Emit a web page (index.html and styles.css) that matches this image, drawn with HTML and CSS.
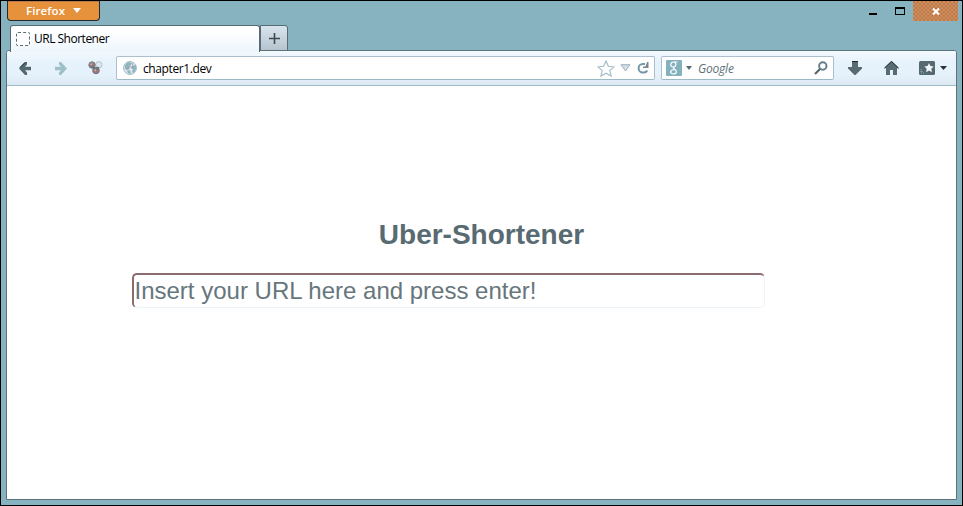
FILE: index.html
```html
<!DOCTYPE html>
<html lang="en">
<head>
<meta charset="utf-8">
<title>URL Shortener</title>
<link rel="stylesheet" href="styles.css">
</head>
<body>
<div class="window">
  <header class="titlebar">
    <button class="app-menu"><span class="app-name">Firefox</span><svg width="8" height="5"><path d="M0 0h8L4 5z" fill="#fff"/></svg></button>
    <div class="controls">
      <svg class="minimize" width="8" height="2"><path d="M0 0h8v2H0z"/></svg>
      <svg class="maximize" width="10" height="8"><path d="M0 0h10v8H0zM1 2v5h8V2z" fill-rule="evenodd"/></svg>
      <button class="close"><svg width="8" height="7"><path d="M1 .5l6 6M7 .5l-6 6" stroke="#fff" stroke-width="2"/></svg></button>
    </div>
  </header>
  <nav class="tabs">
    <div class="tab"><span class="favicon"></span><span class="tab-title">URL Shortener</span></div>
    <button class="new-tab"><svg width="11" height="11"><path d="M5.5 0v11M0 5.5h11" stroke="#3c4a50" stroke-width="1.6"/></svg></button>
  </nav>
  <main class="frame">
    <div class="toolbar">
      <svg class="back" width="13" height="13"><path d="M0 6.5L6 0h2v2.5L6 4.8h6v3.4H6l2 2.3V13H6z" fill="#536970"/><path d="M1 5.5L6 .5" stroke="#182126"/></svg>
      <svg class="forward" width="13" height="13"><path d="M13 6.5L7 0H5v2.5l2 2.3H1v3.4h6l-2 2.3V13h2z" fill="#9fc0c9"/></svg>
      <svg class="addon" width="15" height="14"><circle cx="10.8" cy="3.8" r="3.2" fill="#dfe8ef" stroke="#b0c1ca"/><circle cx="4" cy="4" r="3.2" fill="#a37373" stroke="#75838a"/><circle cx="8" cy="9.5" r="3.3" fill="#a37373" stroke="#6b7b82"/><path d="M4 5l3 3.5M9 9l1.5-3" stroke="#66767d" stroke-width="2"/><circle cx="3.3" cy="3.2" r="1" fill="#c4b3b8"/><circle cx="7.3" cy="9.2" r="1" fill="#d0b0ab"/></svg>
      <div class="field address">
        <svg class="globe" width="14" height="14"><circle cx="7" cy="7" r="6.4" fill="#dce9ee" stroke="#9cb6bf"/><path d="M2 4l3-3 4 1-1 2-2 1 1 2-2 2-3-1zM9 5l4-1v4l-2 4-2-1 1-3-2-1zM4 10l3-1 1 4-3-1z" fill="#8fb5c0"/><path d="M3 9l4-4 2 2M9 2l1 3-1 3" fill="none" stroke="#a78f94" stroke-width=".7"/></svg>
        <span class="url">chapter1.dev</span>
        <svg class="star" width="18" height="17"><path d="M9 1l2.4 5.3 5.6.6-4.2 3.7 1.3 5.5L9 13.2l-5.1 2.9 1.3-5.5L1 6.9l5.6-.6z" fill="#fff" stroke="#a5c0c9" stroke-width="1.2"/></svg>
        <svg class="history" width="11" height="8"><path d="M1 .7h9L5.5 7z" fill="#d4dce4" stroke="#9db2bd"/></svg>
        <svg class="reload" width="12" height="12"><path d="M8 2.1H5.8A4.2 4.2 0 0 0 5.8 10.5H7a3.5 3.5 0 0 0 3.2-2" fill="none" stroke="#7199a5" stroke-width="2"/><path d="M11.5 0v6H6V4.5h2.5L10 0z" fill="#6f8e98"/><path d="M8.5 4.5H10V2.5" fill="none" stroke="#a47375"/></svg>
      </div>
      <div class="field search">
        <svg class="engine" width="16" height="16"><rect width="16" height="16" rx="1" fill="#83b2be"/><path d="M11.5 2H7.8C3.8 2 3.8 7 7.2 7 10.8 7 10.5 2 7.8 2M8 7c-1 1-.3 1.5.7 2.3 3 2.2 1.5 4.7-1.2 4.7-4 0-4-4.3 1-4.5" fill="none" stroke="#fff" stroke-width="1.2"/></svg>
        <svg class="engine-caret" width="6" height="4"><path d="M0 0h6L3 4z" fill="#586c73"/></svg>
        <span class="provider">Google</span>
        <svg class="magnifier" width="14" height="14"><circle cx="8.8" cy="5" r="3.7" fill="#fff" stroke="#64818a" stroke-width="2"/><path d="M6 8l-5 5" stroke="#53676f" stroke-width="2.2"/></svg>
      </div>
      <svg class="download" width="14" height="14"><path d="M4 0h6v6h4v1.5L7.5 14h-1L0 7.5V6h4z" fill="#586b72"/><path d="M4 .5h6" stroke="#1d282c"/></svg>
      <svg class="home" width="15" height="14"><path d="M7.5 0L15 7.3H13V14H9V9H6v5H2V7.3H0z" fill="#586b72"/><path d="M.5 7l7-6.6 7 6.6" fill="none" stroke="#1d282c"/></svg>
      <svg class="bookmarks" width="16" height="14"><rect width="16" height="14" rx="1.5" fill="#566970"/><path d="M10 2l1.4 3.1 3.3.4-2.4 2.3.6 3.4L10 9.6l-2.9 1.6.6-3.4-2.4-2.3 3.3-.4z" fill="#f1f8fd"/><path d="M2 8v4h3M3 10v1" fill="none" stroke="#86b3bf" stroke-dasharray="1 1"/></svg>
      <svg class="bookmarks-caret" width="7" height="4"><path d="M0 0h7L3.5 4z" fill="#273238"/></svg>
    </div>
    <section class="page">
      <h1>Uber-Shortener</h1>
      <input class="url-input" type="text" placeholder="Insert your URL here and press enter!">
    </section>
  </main>
</div>
</body>
</html>
```
FILE: styles.css
```css
* { box-sizing: border-box; }
body { margin: 0; overflow: hidden; font-family: "Open Sans", "Noto Sans", sans-serif; font-size: 12px; color: #000; }
svg { display: block; flex: none; }
button { font: inherit; padding: 0; }

.window { width: 963px; height: 506px; display: flex; flex-direction: column; background: #86b3bf; border: 1px solid #000; padding: 0 5px 5px; }
.titlebar { display: flex; justify-content: space-between; height: 24px; flex: none; }
.app-menu { display: flex; align-items: center; width: 93px; height: 20px; margin-left: 1px; padding: 0 0 1px 18px; background: #e6913b; border: 1px solid #24292b; border-top: 0; border-radius: 0 0 4px 4px; color: #fff; box-shadow: inset 0 1px #b87852; }
.app-name { width: 47px; text-align: left; font-weight: 600; font-size: 11.5px; letter-spacing: .1px; }
.controls { display: flex; }
.minimize { margin: 12px 18px 0 0; }
.maximize { margin: 6px 8px 0 0; }
.close { display: flex; align-items: center; justify-content: center; width: 45px; height: 20px; margin-right: -1px; border: 0; background: repeating-conic-gradient(#dc8b42 0 25%, #b07c66 0 50%) 0 0 / 4px 4px; }

.tabs { display: flex; height: 25px; flex: none; padding-left: 4px; }
.tab { display: flex; align-items: center; width: 250px; height: 27px; margin-bottom: -2px; padding: 0 0 2px 5px; border: 1px solid #566b72; border-bottom: 0; border-radius: 3px 3px 0 0; background: linear-gradient(#fff, #fff 5px, #edf6fd 26px); position: relative; }
.favicon { width: 14px; height: 14px; margin: 1px 4px 0 0; border: 1px dashed #596b73; border-radius: 2px; background: #fff; }
.tab-title { letter-spacing: -.5px; }
.new-tab { display: flex; align-items: center; justify-content: center; width: 28px; height: 26px; border: 1px solid #566b72; border-radius: 0 3px 0 0; background: linear-gradient(#d8e4ed, #b7c4cf); }

.frame { display: flex; flex-direction: column; flex: 1; min-height: 0; border: 1px solid #5d7178; border-radius: 3px 3px 0 0; background: #fff; overflow: hidden; }
.toolbar { display: flex; align-items: center; height: 35px; flex: none; border-bottom: 1px solid #9ebcc8; background: linear-gradient(#f3f9fe, #e6f2fc 12px, #e5f1fb 24px, #dce9f2); }
.back { margin-left: 12px; }
.forward { margin-left: 22px; }
.addon { margin: 0 13px 0 21px; }
.field { display: flex; align-items: center; height: 24px; background: #fff; border: 1px solid #adbfcd; border-bottom-color: #9abbc5; border-radius: 2px; }
.address { width: 539px; padding-left: 6px; }
.url { flex: 1; margin-left: 6px; letter-spacing: -.4px; }
.star { margin-right: 5px; }
.history { margin-right: 6px; }
.reload { margin-right: 5px; }
.search { width: 173px; margin-left: 6px; padding-left: 4px; }
.engine-caret { margin: 0 6px 0 4px; }
.provider { flex: 1; color: #5d7178; font-style: italic; letter-spacing: -.2px; }
.magnifier { margin-right: 5px; }
.download { margin-left: 14px; }
.home { margin-left: 22px; }
.bookmarks { margin-left: 20px; }
.bookmarks-caret { margin-left: 5px; }

.page { width: 700px; margin: 0 auto; padding-top: 131px; font-family: "Liberation Sans", Arial, sans-serif; }
h1 { margin: 0 0 20px; text-align: center; font-size: 28px; line-height: 36px; color: #586b72; }
.url-input { display: block; width: 633px; height: 35px; padding: 1px; border: 2px solid #8b6c70; border-right: 1px solid #edf5fb; border-bottom: 1px solid #edf5fb; border-radius: 5px; background: #fff; font: 24px "Liberation Sans", Arial, sans-serif; }
.url-input::placeholder { color: #66767c; opacity: 1; }
```
